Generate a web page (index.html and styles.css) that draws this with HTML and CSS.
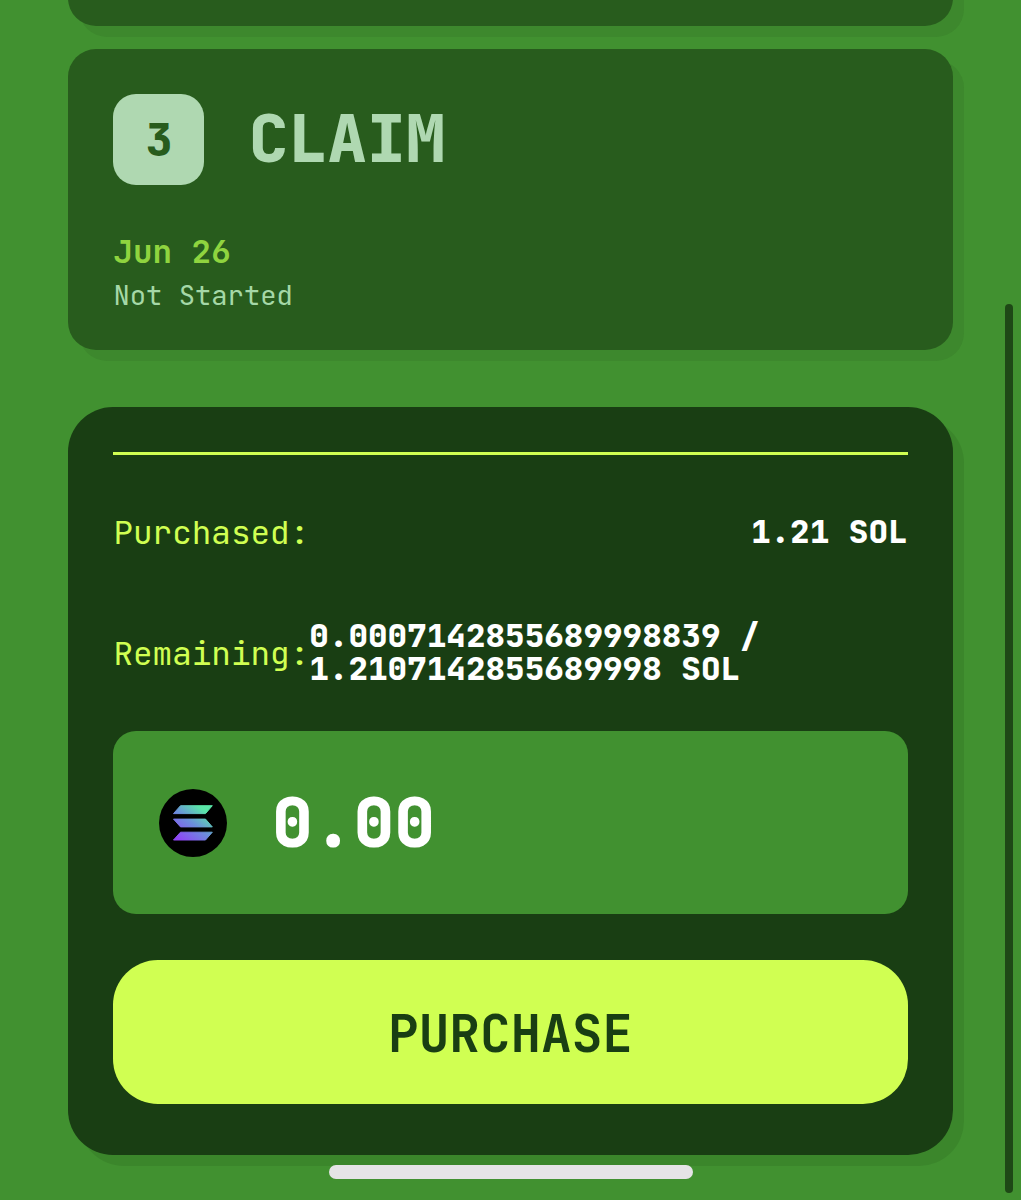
FILE: index.html
```html
<!DOCTYPE html>
<html lang="en">
<head>
  <meta charset="UTF-8" />
  <title>Token Sale</title>
  <link rel="stylesheet" href="styles.css">
</head>
<body>

  <main class="page">
    <!-- Previous step, scrolled mostly out of view -->
    <section class="step-card step-prev"></section>

    <section class="step-card">
      <div class="step-head">
        <div class="step-number">3</div>
        <h2 class="step-title">CLAIM</h2>
      </div>
      <div class="step-date">Jun 26</div>
      <div class="step-status">Not Started</div>
    </section>

    <section class="buy-card">
      <div class="divider"></div>
      <div class="info-row">
        <span class="label">Purchased:</span>
        <span class="value">1.21 SOL</span>
      </div>
      <div class="info-row">
        <span class="label label-low">Remaining:</span>
        <span class="value value-wide">0.0007142855689998839 / 1.2107142855689998 SOL</span>
      </div>

      <div class="amount-box">
        <svg class="sol-icon" viewBox="0 0 68 68">
          <defs>
            <linearGradient id="sol" gradientUnits="userSpaceOnUse" x1="18" y1="54" x2="48" y2="14">
              <stop offset="0.08" stop-color="#8f45f5" />
              <stop offset="0.5" stop-color="#6b8fdc" />
              <stop offset="0.85" stop-color="#5ae6a8" />
            </linearGradient>
          </defs>
          <circle cx="34" cy="34" r="34" />
          <g fill="url(#sol)" stroke="url(#sol)" stroke-linejoin="round">
            <path d="M21.5 16.7H53.3L46.5 24.6H14.5Z" />
            <path d="M14.5 30.1H46.5L53.3 37.9H21.5Z" />
            <path d="M21.5 43.2H53.3L46.5 51H14.5Z" />
          </g>
        </svg>
        <span class="amount">0.00</span>
      </div>

      <button class="buy-button">PURCHASE</button>
    </section>
  </main>

  <div class="scrollbar"></div>
  <div class="home-bar"></div>

</body>
</html>
```
FILE: styles.css
```css
* {
  box-sizing: border-box;
}

body {
  margin: 0;
  height: 1200px;
  overflow: hidden;
  position: relative;
  background: #419130;
  font-family: "JetBrains Mono", "DejaVu Sans Mono", monospace;
}

.page {
  display: flex;
  flex-direction: column;
  padding: 0 68px;
}

.step-card {
  padding: 45.4px;
  height: 301px;
  background: #285c1d;
  border-radius: 28px;
  box-shadow: 11px 11px 0 rgba(25, 62, 19, 0.1);
}

.step-prev {
  height: 126px;
  margin: -100px 0 23px;
}

.step-head {
  display: flex;
  align-items: center;
  gap: 44.5px;
  margin-bottom: 50.6px;
}

.step-number {
  width: 91px;
  height: 91px;
  line-height: 92px;
  border-radius: 23px;
  background: #afd8b1;
  color: #285c1d;
  font-size: 45px;
  font-weight: 800;
  text-align: center;
}

.step-title {
  margin: 0;
  padding-bottom: 1px;
  font-size: 65.5px;
  line-height: 86px;
  font-weight: 800;
  color: #afd8b1;
}

.step-date {
  font-size: 32.6px;
  line-height: 32px;
  font-weight: 600;
  color: #8fd43f;
}

.step-status {
  margin-top: 12px;
  font-size: 27.2px;
  line-height: 30px;
  color: #a5d8a7;
}

.buy-card {
  margin-top: 56.5px;
  padding: 45.4px;
  height: 748px;
  background: #193e13;
  border-radius: 45px;
  box-shadow: 11px 11px 0 rgba(25, 62, 19, 0.13);
}

.divider {
  height: 3px;
  margin-bottom: 32px;
  background: #d0ff52;
}

.info-row {
  display: flex;
  align-items: center;
  justify-content: space-between;
  height: 90px;
  margin-bottom: 30px;
  font-size: 32.65px;
  line-height: 33px;
}

.label {
  padding-top: 1px;
  color: #d0ff52;
}

.label-low {
  padding-top: 3px;
}

.value {
  color: #fff;
  font-weight: 800;
}

.value-wide {
  flex: 1;
  padding-top: 1px;
}

.amount-box {
  display: flex;
  align-items: center;
  gap: 45px;
  height: 183px;
  margin: 34px 0 46px;
  padding: 2px 45.5px 0;
  border-radius: 23px;
  background: #419130;
}

.sol-icon {
  width: 68px;
  height: 68px;
}

.amount {
  font-size: 68px;
  line-height: 68px;
  font-weight: 800;
  color: #fff;
}

.buy-button {
  display: block;
  width: 100%;
  height: 144px;
  padding: 3px 0 0;
  border: none;
  border-radius: 45px;
  background: #d0ff52;
  color: #193e13;
  font-family: inherit;
  font-size: 51px;
  font-weight: 700;
}

/* phone overlays */
.scrollbar {
  position: absolute;
  top: 304px;
  right: 8px;
  width: 8px;
  height: 889px;
  border-radius: 4px;
  background: #1e4816;
}

.home-bar {
  position: absolute;
  left: 329px;
  bottom: 21px;
  width: 364px;
  height: 14px;
  border-radius: 7px;
  background: #e5e4e6;
}
```
